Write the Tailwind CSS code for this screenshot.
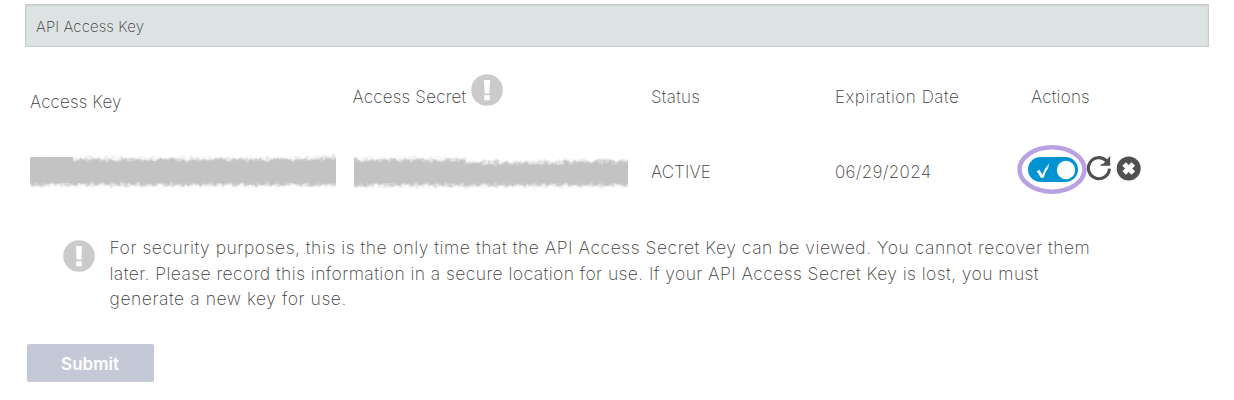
<!DOCTYPE html>
<html lang="en">
<head>
<meta charset="utf-8">
<title>API Access Key</title>
<script src="https://cdn.jsdelivr.net/npm/@tailwindcss/browser@4"></script>
</head>
<body class="h-[400px] w-[1234px] overflow-hidden bg-white pt-1 font-['Inter','Lato',sans-serif] text-[17px] leading-[25px] font-extralight text-[#404040]">
<svg class="absolute size-0" aria-hidden="true">
  <filter id="rough" x="-2%" y="-30%" width="104%" height="160%">
    <feTurbulence type="fractalNoise" baseFrequency="0.2" numOctaves="2" seed="4" result="n"/>
    <feGaussianBlur in="SourceGraphic" stdDeviation="0 1.6" result="b"/>
    <feDisplacementMap in="b" in2="n" scale="7" xChannelSelector="R" yChannelSelector="G" result="d"/>
    <feGaussianBlur in="d" stdDeviation="0.6"/>
  </filter>
  <symbol id="info" viewBox="0 0 32 32">
    <circle cx="16" cy="16" r="15.8" fill="#cbcbcb"/>
    <path d="M13 6h6l-.6 13.6h-4.8zM13.2 21.3h5.6v4.9h-5.6z" fill="#fff"/>
  </symbol>
</svg>
<header class="ml-[25px] flex h-[43px] w-[1184px] items-center border border-[#c8cacb] bg-[#dde2e3] pl-[10px] pt-[2px] text-[15px] shadow-[inset_0_1px_2px_#00000015]"><span class="tracking-[0.1px]">API Access Key</span></header>

<main>
  <div class="ml-[30px] mt-[27px] grid h-[70px] grid-cols-[322.5px_298.5px_184px_196px_160px] items-start">
    <div class="pt-4"><span class="tracking-[0.15px]">Access Key</span></div>
    <div class="flex"><span class="w-[114px] pt-[11px] tracking-[0.22px] whitespace-nowrap">Access Secret</span><svg class="ml-1 size-8"><use href="#info"/></svg></div>
    <div class="pt-[11px]"><span class="tracking-[0.25px]">Status</span></div>
    <div class="pt-[11px]"><span class="tracking-[0.54px]">Expiration Date</span></div>
    <div class="pt-[11px]"><span class="tracking-[0.25px]">Actions</span></div>
  </div>
  <div class="ml-[30px] grid h-[56px] grid-cols-[322.5px_298.5px_184px_196px_160px] items-start">
    <svg class="mt-1 h-[48px] w-[306px]" viewBox="0 0 306 48"><path filter="url(#rough)" d="M-4 11H280L310 9V37H3L-4 33Z" fill="#c3c3c3"/><path d="M1 9H43V33H3L0 28V11Z" fill="#c3c3c3"/></svg>
    <svg class="ml-[1px] mt-1 h-[48px] w-[274px]" viewBox="0 0 274 48"><path filter="url(#rough)" d="M-4 11.5H112V14.5H210V13H279V37.5H-4Z" fill="#c3c3c3"/></svg>
    <div class="pt-4"><span class="tracking-[0.1px]">ACTIVE</span></div>
    <div class="pt-4"><span class="tracking-[0.3px]">06/29/2024</span></div>
    <svg class="-ml-[16px] h-[52px] w-[130px]" viewBox="0 0 130 52">
      <rect x="13" y="13" width="50" height="25" rx="12.5" fill="#0093d2"/>
      <circle cx="51" cy="26" r="9.2" fill="#fff"/>
      <path d="M21.6 27l3-.9 2.8 4.6q2.2-6.6 6.8-11.2l-1 4.2q-3 4-4.6 10h-2.7z" fill="#fff"/>
      <path d="M91.4 16.8A10.5 10.5 0 1 0 94.4 24.6" fill="none" stroke="#505050" stroke-width="3.1"/>
      <path d="M95.2 11.8v10h-9.6v-1.2l3-1.2z" fill="#505050"/>
      <circle cx="113.7" cy="24.5" r="12" fill="#505050"/>
      <path d="M109.1 19.9l9.2 9.2m0-9.2l-9.2 9.2" stroke="#fff" stroke-width="5"/>
      <ellipse cx="37" cy="25.5" rx="32.5" ry="22.2" fill="none" stroke="#b8a2e2" stroke-width="4.5"/>
    </svg>
  </div>
  <div class="ml-[63px] mt-[35px] flex">
    <svg class="mt-[5px] size-8"><use href="#info"/></svg>
    <p class="ml-[14.5px] whitespace-nowrap text-[17.5px] leading-[25.5px]"><span class="tracking-[0.54px]">For security purposes, this is the only time that the API Access Secret Key can be viewed. You cannot recover them</span><br><span class="tracking-[0.43px]">later. Please record this information in a secure location for use. If your API Access Secret Key is lost, you must</span><br><span class="tracking-[0.55px]">generate a new key for use.</span></p>
  </div>
  <button class="ml-[27px] mt-[32px] flex h-[38px] w-[127px] items-center justify-center rounded-[2px] bg-[#c5c9d7] pt-[3px] pr-px text-[17px] font-semibold text-white"><span>Submit</span></button>
</main>
</body>
</html>
